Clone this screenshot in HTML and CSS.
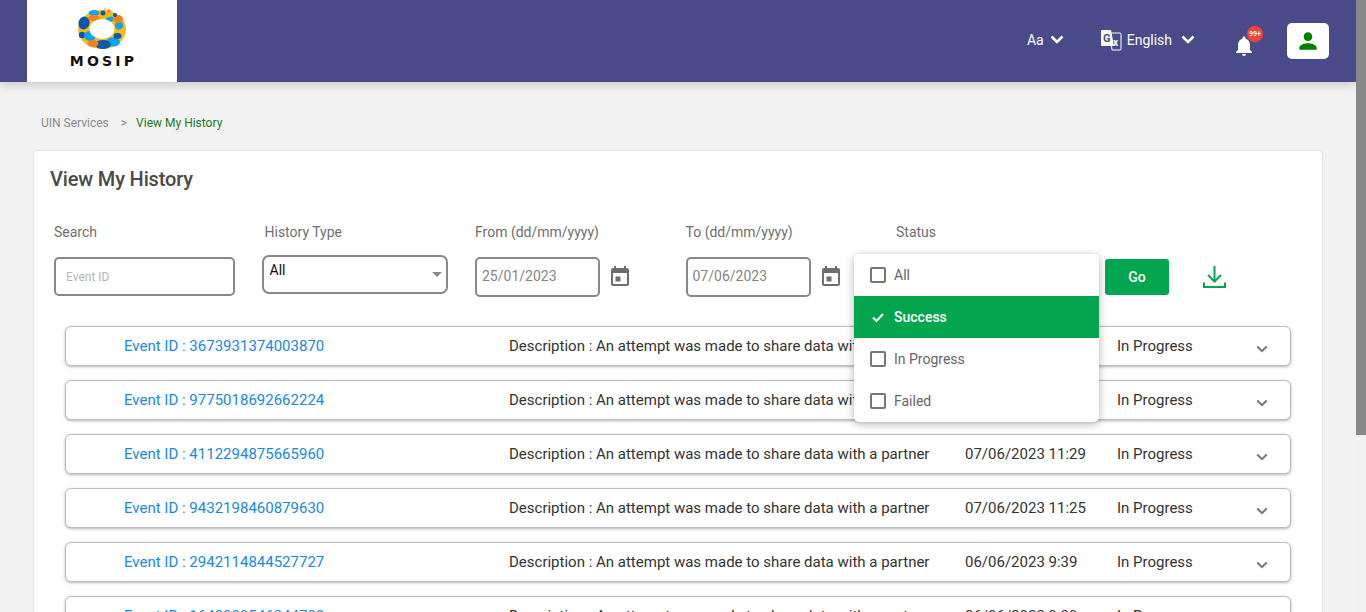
FILE: index.html
```html
<!DOCTYPE html>
<html lang="en">
<head>
  <meta charset="UTF-8">
  <title>View My History</title>
  <link rel="stylesheet" href="styles.css">
</head>
<body>

  <header class="topbar">
    <div class="logo">
      <svg class="logo-mark" width="60" height="50" viewBox="72 4 60 50">
        <ellipse cx="102" cy="29.500" rx="24" ry="19.500" fill="#fdb913"/>
        <ellipse cx="84" cy="23" rx="5.500" ry="6.500" fill="#0b57b0" transform="rotate(20 84 23)"/>
        <ellipse cx="113" cy="42" rx="7" ry="4.500" fill="#0aa5ee"/>
        <ellipse cx="103" cy="44.500" rx="8" ry="4.500" fill="#0b57b0"/>
        <ellipse cx="117.500" cy="36" rx="4" ry="3" fill="#0b57b0"/>
        <circle cx="82" cy="35" r="3.2" fill="#0b57b0"/>
        <circle cx="119" cy="25.500" r="4" fill="#0aa5ee"/>
        <ellipse cx="90" cy="36" rx="6" ry="5" fill="#0aa5ee"/>
        <ellipse cx="94" cy="13" rx="5.500" ry="3" fill="#0aa5ee"/>
        <ellipse cx="110" cy="19" rx="4" ry="2.500" fill="#0aa5ee"/>
        <ellipse cx="94" cy="18" rx="6" ry="3" fill="#f7811f"/>
        <ellipse cx="118" cy="19" rx="5" ry="4" fill="#f7811f"/>
        <ellipse cx="93" cy="43.500" rx="5.500" ry="3.500" fill="#f7811f"/>
        <ellipse cx="102" cy="29" rx="12.500" ry="10" fill="#fff"/>
        <circle cx="103" cy="13" r="2.500" fill="#0b57b0"/>
        <circle cx="109" cy="11" r="1.800" fill="#f7811f"/>
        <circle cx="105" cy="9" r="1" fill="#fdb913"/>
        <circle cx="115" cy="15" r="2" fill="#0b57b0"/>
        <circle cx="108" cy="15.500" r="2" fill="#fdb913"/>
      </svg>
      <span class="logo-name">MOSIP</span>
    </div>

    <div class="topbar-right">
      <div class="top-item font-size">
        <span>Aa</span>
        <svg class="top-chevron" width="14" height="9" viewBox="0 0 14 9"><path d="M1.500 1.500 7 7l5.500-5.500"/></svg>
      </div>
      <div class="top-item language">
        <svg width="22" height="22" viewBox="0 0 22 22">
          <path d="M10 4h10a1 1 0 0 1 1 1v15a1 1 0 0 1-1 1h-8l-2-17z" fill="#494a8a" stroke="#fff" stroke-width="1"/>
          <path d="M2 1h9l3 16H2a1 1 0 0 1-1-1V2a1 1 0 0 1 1-1z" fill="#fff"/>
          <text x="3" y="13" class="translate-g">G</text>
          <text x="13" y="17" class="translate-x">x</text>
        </svg>
        <span>English</span>
        <svg class="top-chevron" width="14" height="9" viewBox="0 0 14 9"><path d="M1.500 1.500 7 7l5.500-5.500"/></svg>
      </div>
      <div class="bell">
        <svg width="24" height="24" viewBox="0 0 24 24" fill="#fff"><path d="M12 22c1.100 0 2-.9 2-2h-4c0 1.100.89 2 2 2zm6-6v-5c0-3.070-1.640-5.640-4.500-6.320V4c0-.83-.67-1.500-1.500-1.500s-1.500.67-1.500 1.500v.68C7.630 5.360 6 7.920 6 11v5l-2 2v1h16v-1l-2-2z"/></svg>
        <span class="badge">99+</span>
      </div>
      <div class="profile">
        <svg width="26" height="26" viewBox="0 0 24 24" fill="#008000"><path d="M12 12c2.210 0 4-1.790 4-4s-1.790-4-4-4-4 1.790-4 4 1.790 4 4 4zm0 2c-2.670 0-8 1.340-8 4v2h16v-2c0-2.660-5.330-4-8-4z"/></svg>
      </div>
    </div>
  </header>

  <main class="content">
    <nav class="breadcrumb">
      <span>UIN Services</span>
      <span class="crumb-sep">&gt;</span>
      <span class="crumb-current">View My History</span>
    </nav>

    <section class="card">
      <h1>View My History</h1>

      <div class="filters">
        <div class="field">
          <label>Search</label>
          <input class="text-input search-input" type="text" placeholder="Event ID">
        </div>
        <div class="field">
          <label>History Type</label>
          <div class="select-box">All<span class="select-arrow"></span></div>
        </div>
        <div class="field">
          <label>From (dd/mm/yyyy)</label>
          <div class="date-group">
            <input class="text-input date-input" type="text" value="25/01/2023">
            <svg width="24" height="24" viewBox="0 0 24 24" fill="#6e6e6e"><path d="M12.500 11.500h-5v5h5zM16 1v2H8V1H6v2H5c-1.110 0-1.990.9-1.990 2L3 19c0 1.100.89 2 2 2h14c1.100 0 2-.9 2-2V5c0-1.100-.9-2-2-2h-1V1zm3 18H5V8h14z"/></svg>
          </div>
        </div>
        <div class="field">
          <label>To (dd/mm/yyyy)</label>
          <div class="date-group">
            <input class="text-input date-input" type="text" value="07/06/2023">
            <svg width="24" height="24" viewBox="0 0 24 24" fill="#6e6e6e"><path d="M12.500 11.500h-5v5h5zM16 1v2H8V1H6v2H5c-1.110 0-1.990.9-1.990 2L3 19c0 1.100.89 2 2 2h14c1.100 0 2-.9 2-2V5c0-1.100-.9-2-2-2h-1V1zm3 18H5V8h14z"/></svg>
          </div>
        </div>
        <div class="field status-field">
          <label>Status</label>
          <ul class="status-menu">
            <li><span class="check"></span>All</li>
            <li class="selected"><svg class="tick" width="14" height="14" viewBox="0 0 14 14"><path d="M2 7.500 5.500 11 12 4"/></svg>Success</li>
            <li><span class="check"></span>In Progress</li>
            <li><span class="check"></span>Failed</li>
          </ul>
        </div>
        <button class="go-btn">Go</button>
        <svg class="download" width="25" height="24" viewBox="0 0 25 24"><path d="M12.500 1v15M6 10l6.500 6.500L19 10M2 17.500V22h21v-4.500"/></svg>
      </div>

      <div class="history-list">
        <div class="history-row">
          <span class="event-id">Event ID : 3673931374003870</span>
          <span>Description : An attempt was made to share data with a partner</span>
          <span>07/06/2023 11:33</span>
          <span>In Progress</span>
          <svg class="row-chevron" width="12" height="8" viewBox="0 0 14 9"><path d="M1.500 1.500 7 7l5.500-5.500"/></svg>
        </div>
        <div class="history-row">
          <span class="event-id">Event ID : 9775018692662224</span>
          <span>Description : An attempt was made to share data with a partner</span>
          <span>07/06/2023 11:31</span>
          <span>In Progress</span>
          <svg class="row-chevron" width="12" height="8" viewBox="0 0 14 9"><path d="M1.500 1.500 7 7l5.500-5.500"/></svg>
        </div>
        <div class="history-row">
          <span class="event-id">Event ID : 4112294875665960</span>
          <span>Description : An attempt was made to share data with a partner</span>
          <span>07/06/2023 11:29</span>
          <span>In Progress</span>
          <svg class="row-chevron" width="12" height="8" viewBox="0 0 14 9"><path d="M1.500 1.500 7 7l5.500-5.500"/></svg>
        </div>
        <div class="history-row">
          <span class="event-id">Event ID : 9432198460879630</span>
          <span>Description : An attempt was made to share data with a partner</span>
          <span>07/06/2023 11:25</span>
          <span>In Progress</span>
          <svg class="row-chevron" width="12" height="8" viewBox="0 0 14 9"><path d="M1.500 1.500 7 7l5.500-5.500"/></svg>
        </div>
        <div class="history-row">
          <span class="event-id">Event ID : 2942114844527727</span>
          <span>Description : An attempt was made to share data with a partner</span>
          <span>06/06/2023 9:39</span>
          <span>In Progress</span>
          <svg class="row-chevron" width="12" height="8" viewBox="0 0 14 9"><path d="M1.500 1.500 7 7l5.500-5.500"/></svg>
        </div>
        <div class="history-row">
          <span class="event-id">Event ID : 1640089546344780</span>
          <span>Description : An attempt was made to share data with a partner</span>
          <span>06/06/2023 9:39</span>
          <span>In Progress</span>
          <svg class="row-chevron" width="12" height="8" viewBox="0 0 14 9"><path d="M1.500 1.500 7 7l5.500-5.500"/></svg>
        </div>
      </div>
    </section>
  </main>

  <div class="scrollbar"><div class="scrollbar-thumb"></div></div>

</body>
</html>
```
FILE: styles.css
```css
body {
  margin: 0;
  padding-right: 10px;
  background-color: #f2f2f2;
  font-family: Roboto, "Liberation Sans", sans-serif;
  font-size: 14px;
  color: #333;
}

/* the page scrollbar, drawn since the browser hides its own */
.scrollbar {
  position: fixed;
  top: 0;
  right: 0;
  bottom: 0;
  width: 10px;
  background-color: #f1f1f1;
}

.scrollbar-thumb {
  height: 435px;
  background-color: #888;
}

/* top bar */
.topbar {
  display: flex;
  justify-content: space-between;
  height: 82px;
  padding: 0 27px;
  background-color: #494a8a;
  box-shadow: 0 2px 10px rgba(0, 0, 0, 0.2);
}

.logo {
  display: flex;
  flex-direction: column;
  align-items: center;
  width: 150px;
  padding-top: 4px;
  box-sizing: border-box;
  background-color: #fff;
}

.logo-mark {
  display: block;
}

.logo-name {
  margin-right: -3px;
  font-family: "DejaVu Sans", sans-serif;
  font-size: 14px;
  font-weight: 700;
  line-height: 14px;
  letter-spacing: 3.200px;
  color: #111;
}

.topbar-right {
  display: flex;
  align-items: center;
}

.top-item {
  display: flex;
  align-items: center;
  color: #fff;
}

.top-chevron {
  fill: none;
  stroke: #fff;
  stroke-width: 2.600;
}

.font-size {
  gap: 6px;
  margin-right: 36px;
  margin-top: -3px;
}

.language {
  gap: 5px;
  margin-right: 37px;
  margin-top: -3px;
}

.language .top-chevron {
  margin-left: 4px;
}

.translate-g {
  font-size: 11px;
  font-weight: 700;
  fill: #494a8a;
}

.translate-x {
  font-size: 10px;
  font-weight: 700;
  fill: #fff;
}

.bell {
  position: relative;
  height: 24px;
  margin-right: 31px;
  margin-top: 9px;
}

.bell svg {
  display: block;
}

.badge {
  position: absolute;
  top: -8px;
  left: 15px;
  width: 16px;
  height: 16px;
  border-radius: 50%;
  background-color: #f44336;
  color: #fff;
  font-size: 7px;
  font-weight: 700;
  line-height: 16px;
  text-align: center;
}

.profile {
  display: flex;
  align-items: center;
  justify-content: center;
  width: 42px;
  height: 36px;
  border-radius: 5px;
  background-color: #fff;
}

/* page content */
.content {
  padding: 0 34px 9px;
}

.breadcrumb {
  display: flex;
  align-items: center;
  height: 69px;
  padding-left: 7px;
  padding-top: 12px;
  box-sizing: border-box;
  font-size: 12px;
  color: #8a8a8a;
}

.crumb-sep {
  margin: 0 9px 0 12px;
}

.crumb-current {
  color: #1d7a1d;
}

.card {
  height: 701px;
  padding: 0 31px 0 16px;
  box-sizing: border-box;
  border-radius: 4px;
  background-color: #fff;
  box-shadow: 0 0 3px rgba(0, 0, 0, 0.12);
}

.card h1 {
  margin: 0;
  padding-top: 16px;
  font-size: 20px;
  font-weight: 500;
  line-height: 24px;
  letter-spacing: -0.15px;
  color: #4a4a4a;
}

/* filters */
.filters {
  display: flex;
  margin-top: 33px;
  padding-left: 4px;
}

.field {
  width: 210.500px;
  flex-shrink: 0;
}

.field label {
  display: block;
  height: 32px;
  line-height: 16px;
  color: #6f6f6f;
}

.text-input {
  display: block;
  height: 40px;
  padding: 0;
  box-sizing: border-box;
  border: 2px solid #888;
  border-radius: 5px;
  background-color: #fff;
  font-family: inherit;
  outline: none;
}

.search-input {
  width: 181px;
  height: 39px;
  margin-top: 1px;
  padding-left: 10px;
  font-size: 12px;
}

.search-input::placeholder {
  color: #b5b5b5;
}

.select-box {
  position: relative;
  width: 186px;
  height: 39px;
  margin-left: -3px;
  margin-top: -1px;
  padding: 4px 0 0 6px;
  box-sizing: border-box;
  border: 2px solid #888;
  border-radius: 7px;
  color: #111;
  line-height: 18px;
}

.select-arrow {
  position: absolute;
  top: 15px;
  right: 4px;
  border-left: 5px solid transparent;
  border-right: 5px solid transparent;
  border-top: 5px solid #8a8a8a;
}

.date-group {
  display: flex;
  align-items: center;
  gap: 8px;
  margin-top: 1px;
}

.date-input {
  width: 125px;
  padding-left: 5px;
  padding-bottom: 2px;
  font-size: 14px;
  color: #858585;
}

.status-field {
  position: relative;
  width: 209px;
}

.status-menu {
  position: absolute;
  top: 30px;
  left: -42px;
  z-index: 2;
  width: 245px;
  margin: 0;
  padding: 0;
  list-style: none;
  border-radius: 5px;
  background-color: #fff;
  box-shadow: 0 2px 8px rgba(0, 0, 0, 0.3);
}

.status-menu li {
  display: flex;
  align-items: center;
  gap: 8px;
  height: 42px;
  padding-left: 16px;
  color: #666;
}

.status-menu .selected {
  background-color: #03a64e;
  color: #fff;
  font-weight: 500;
}

.check {
  width: 12px;
  height: 12px;
  border: 2px solid #777;
  border-radius: 2px;
}

.tick {
  fill: none;
  stroke: #fff;
  stroke-width: 2;
  margin-left: 1px;
  margin-right: 1px;
}

.go-btn {
  align-self: flex-start;
  width: 64px;
  height: 36px;
  margin-top: 35px;
  border: 0;
  border-radius: 3px;
  background-color: #03a64e;
  color: #fff;
  font-family: inherit;
  font-size: 14px;
  font-weight: 500;
}

.download {
  align-self: flex-start;
  margin: 41px 0 0 33px;
  fill: none;
  stroke: #03a64e;
  stroke-width: 2;
}

/* history rows */
.history-list {
  display: flex;
  flex-direction: column;
  gap: 14px;
  margin: 29px 0 0 15px;
}

.history-row {
  display: grid;
  grid-template-columns: 385px 456px 152px 139px auto;
  align-items: center;
  height: 40px;
  padding-left: 58px;
  box-sizing: border-box;
  border: 1px solid #bdbdbd;
  border-radius: 6px;
  background-color: #fff;
  box-shadow: 0 1px 3px rgba(0, 0, 0, 0.3);
  font-size: 15px;
  color: #333;
}

.event-id {
  color: #1a87e8;
}

.row-chevron {
  margin-top: 6px;
  fill: none;
  stroke: #777;
  stroke-width: 2.400;
}
```
